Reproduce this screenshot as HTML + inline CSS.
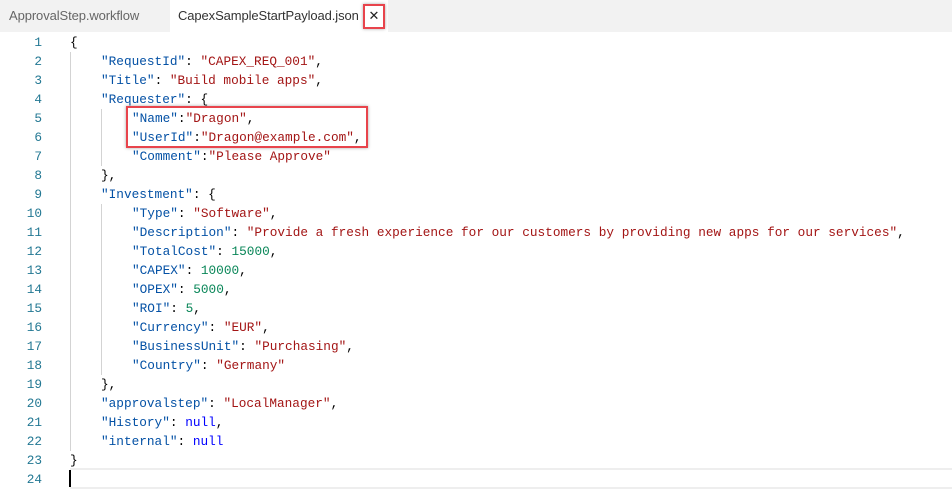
<!DOCTYPE html>
<html><head><style>
body{margin:0;width:952px;height:496px;background:#fff;overflow:hidden;position:relative;font-family:"Liberation Sans",sans-serif}
.tabs{position:absolute;left:0;top:0;width:952px;height:32px;background:#f2f2f2}
.tab{position:absolute;top:0;height:32px;line-height:32px;font-size:13px;color:#666;letter-spacing:-0.1px}
.active{left:170px;width:218px;background:#fff;color:#333;padding-left:8px;box-sizing:border-box}
.close{position:absolute;left:363px;top:4px;width:18px;height:21px;border:2px solid #e8444c;box-shadow:0 0 3px rgba(0,0,0,.35);text-align:center;line-height:20px;font-size:13px;color:#222;background:#fff}
.code{position:absolute;left:0;top:32px;font-family:"Liberation Mono",monospace;font-size:12.75px}
.l{position:absolute;height:19px;line-height:19px;white-space:pre;left:70px}
.n{position:absolute;width:42px;text-align:right;color:#237893;height:19px;line-height:19px;left:0}
.k{color:#0451a5}.s{color:#a31515}.d{color:#098658}.u{color:#0000ff}
.g{position:absolute;width:1px;background:#d3d3d3}
.box{position:absolute;left:126px;top:106px;width:238px;height:38px;border:2px solid #e8444c;box-shadow:0 0 3px rgba(0,0,0,.35)}
</style></head><body>
<div class="tabs">
<div class="tab" style="left:9px">ApprovalStep.workflow</div>
<div class="tab active">CapexSampleStartPayload.json</div>
<div class="close">✕</div>
</div>
<div style="position:absolute;left:70px;top:468px;width:882px;height:17px;border-top:2px solid #eee;border-bottom:2px solid #eee"></div>
<div style="position:absolute;left:69px;top:470px;width:2px;height:17px;background:#000"></div>
<div class="g" style="left:70px;top:52px;height:399px"></div>
<div class="g" style="left:101px;top:109px;height:57px"></div>
<div class="g" style="left:101px;top:204px;height:171px"></div>
<div class="code" id="c"></div>
<div class="box"></div>
<script>
var L=[
[0,'{'],
[1,'<span class=k>"RequestId"</span>: <span class=s>"CAPEX_REQ_001"</span>,'],
[1,'<span class=k>"Title"</span>: <span class=s>"Build mobile apps"</span>,'],
[1,'<span class=k>"Requester"</span>: {'],
[2,'<span class=k>"Name"</span>:<span class=s>"Dragon"</span>,'],
[2,'<span class=k>"UserId"</span>:<span class=s>"Dragon@example.com"</span>,'],
[2,'<span class=k>"Comment"</span>:<span class=s>"Please Approve"</span>'],
[1,'},'],
[1,'<span class=k>"Investment"</span>: {'],
[2,'<span class=k>"Type"</span>: <span class=s>"Software"</span>,'],
[2,'<span class=k>"Description"</span>: <span class=s>"Provide a fresh experience for our customers by providing new apps for our services"</span>,'],
[2,'<span class=k>"TotalCost"</span>: <span class=d>15000</span>,'],
[2,'<span class=k>"CAPEX"</span>: <span class=d>10000</span>,'],
[2,'<span class=k>"OPEX"</span>: <span class=d>5000</span>,'],
[2,'<span class=k>"ROI"</span>: <span class=d>5</span>,'],
[2,'<span class=k>"Currency"</span>: <span class=s>"EUR"</span>,'],
[2,'<span class=k>"BusinessUnit"</span>: <span class=s>"Purchasing"</span>,'],
[2,'<span class=k>"Country"</span>: <span class=s>"Germany"</span>'],
[1,'},'],
[1,'<span class=k>"approvalstep"</span>: <span class=s>"LocalManager"</span>,'],
[1,'<span class=k>"History"</span>: <span class=u>null</span>,'],
[1,'<span class=k>"internal"</span>: <span class=u>null</span>'],
[0,'}'],
[0,'']];
var h='';
for(var i=0;i<L.length;i++){var t=1+i*19;
h+='<div class=n style="top:'+t+'px">'+(i+1)+'</div><div class=l style="top:'+t+'px;left:'+(70+L[i][0]*31)+'px">'+L[i][1]+'</div>';}
document.getElementById('c').innerHTML=h;
</script>
</body></html>
